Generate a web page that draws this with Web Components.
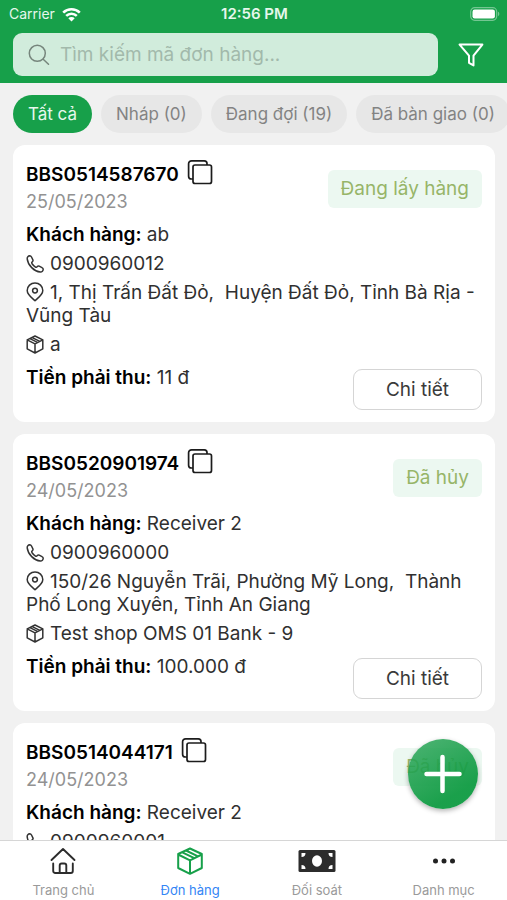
<!DOCTYPE html>
<html lang="vi">
<head>
<meta charset="utf-8">
<meta name="viewport" content="width=device-width, initial-scale=1">
<title>Đơn hàng</title>
<style>
  body { margin: 0; font-family: Inter, "Noto Sans", sans-serif; color: #303030; background: #f1f1f1; }
</style>
</head>
<body>
<orders-app></orders-app>

<template id="t-app">
  <style>
    :host { display: flex; flex-direction: column; height: 100vh; overflow: hidden; }
    header { flex: none; background: #17a04a; padding-bottom: 7px; }
    main { position: relative; flex: 1; min-height: 0; overflow: hidden; }
    nav.chips { display: flex; gap: 9px; padding: 12px 13px; overflow: hidden; }
    .list { display: flex; flex-direction: column; gap: 12px; padding: 0 12px 0 13px; }
    add-button { position: absolute; right: 29px; bottom: 31px; }
  </style>
  <header>
    <status-bar></status-bar>
    <search-bar></search-bar>
  </header>
  <main>
    <nav class="chips" aria-label="Trạng thái">
      <filter-chip active>Tất cả</filter-chip>
      <filter-chip>Nháp (0)</filter-chip>
      <filter-chip>Đang đợi (19)</filter-chip>
      <filter-chip>Đã bàn giao (0)</filter-chip>
    </nav>
    <div class="list">
      <order-card>
        <span slot="code">BBS0514587670</span><span slot="date">25/05/2023</span>
        <span slot="status">Đang lấy hàng</span><span slot="customer">ab</span>
        <span slot="phone">0900960012</span>
        <span slot="address">1, Thị Trấn Đất Đỏ,&nbsp; Huyện Đất Đỏ, Tỉnh Bà Rịa - Vũng Tàu</span>
        <span slot="goods">a</span><span slot="amount">11 đ</span>
      </order-card>
      <order-card>
        <span slot="code">BBS0520901974</span><span slot="date">24/05/2023</span>
        <span slot="status">Đã hủy</span><span slot="customer">Receiver 2</span>
        <span slot="phone">0900960000</span>
        <span slot="address">150/26 Nguyễn Trãi, Phường Mỹ Long,&nbsp; Thành Phố Long Xuyên, Tỉnh An Giang</span>
        <span slot="goods">Test shop OMS 01 Bank - 9</span><span slot="amount">100.000 đ</span>
      </order-card>
      <order-card brief>
        <span slot="code">BBS0514044171</span><span slot="date">24/05/2023</span>
        <span slot="status">Đã hủy</span><span slot="customer">Receiver 2</span>
        <span slot="phone">0900960001</span>
      </order-card>
    </div>
    <add-button></add-button>
  </main>
  <tab-bar></tab-bar>
</template>

<template id="t-status">
  <style>
    :host { display: grid; grid-template-columns: 1fr auto 1fr; align-items: center; height: 28px; padding: 0 7px 0 9px; color: #e6f7ec; font-size: 14px; line-height: 20px; margin-bottom: 5px; }
    .left { display: flex; align-items: center; gap: 7px; }
    b { font-weight: 600; font-size: 15px; }
    .battery { justify-self: end; }
    svg { display: block; }
  </style>
  <span class="left">Carrier
    <svg width="19" height="15" viewBox="0 0 19 15" fill="none" stroke="#fff" stroke-width="2.6"><path d="M1.2 5.6a12 12 0 0 1 16.6 0M4.2 8.9a7.6 7.6 0 0 1 10.6 0"/><path d="M9.5 14.4 6.3 11.2a4.6 4.6 0 0 1 6.4 0z" fill="#fff" stroke="none"/></svg>
  </span>
  <b>12:56 PM</b>
  <svg class="battery" width="30" height="14" viewBox="0 0 30 14"><rect x=".7" y=".7" width="26" height="12.6" rx="4" fill="none" stroke="#74c692" stroke-width="1.2"/><rect x="2.5" y="2.5" width="22.4" height="9" rx="2.2" fill="#fff"/><path d="M28 4.8v4.4c1.8-.6 1.8-3.8 0-4.4z" fill="#74c692"/></svg>
</template>

<template id="t-search">
  <style>
    :host { display: flex; align-items: center; padding: 0 13px; }
    label { flex: 1; min-width: 0; display: flex; align-items: center; gap: 10px; height: 43px; padding: 0 15px; box-sizing: border-box; border-radius: 9px; background: #d1ecdc; }
    input { flex: 1; min-width: 0; border: 0; padding: 0; outline: 0; background: none; font: inherit; font-size: 19px; line-height: 24px; color: #303030; }
    input::placeholder { color: #a2b9ab; opacity: 1; }
    button { flex: none; width: 56px; height: 43px; padding: 0 0 0 10px; border: 0; background: none; display: flex; align-items: center; justify-content: center; }
    svg { flex: none; display: block; }
  </style>
  <label>
    <svg width="22" height="22" viewBox="0 0 22 22" fill="none" stroke="#76857c" stroke-width="1.5" stroke-linecap="round"><circle cx="9.3" cy="9.3" r="8"/><path d="m15.2 15.2 5.3 5"/></svg>
    <input type="search" aria-label="Tìm kiếm mã đơn hàng" placeholder="Tìm kiếm mã đơn hàng...">
  </label>
  <button type="button" aria-label="Lọc">
    <svg width="26" height="24" viewBox="0 0 26 24" fill="none" stroke="#fff" stroke-width="2" stroke-linejoin="round"><path d="M1.6 1.6h22.8l-8.9 11v9.8l-4.500-2.600v-7.200z"/></svg>
  </button>
</template>

<template id="t-chip">
  <style>
    :host { display: block; flex: none; }
    button { height: 38px; padding: 0 15px; border: 0; border-radius: 19px; background: #e7e7e7; color: #838383; font: inherit; font-size: 17px; line-height: 20px; white-space: nowrap; }
    :host([active]) button { background: #17a04a; color: #e8f8ee; }
  </style>
  <button type="button"><slot></slot></button>
</template>

<template id="t-card">
  <style>
    :host { display: flex; flex-direction: column; gap: 6px; padding: 13px 13px 12px; border-radius: 12px; background: #fff; font-size: 19px; line-height: 23px; }
    p, h2 { margin: 0; font-size: inherit; }
    .head { display: flex; justify-content: space-between; align-items: flex-start; margin-bottom: 4px; }
    .title { display: flex; gap: 8px; height: 32px; }
    h2 { color: #000; font-weight: 600; line-height: 34px; }
    b { color: #000; font-weight: 600; }
    .date { color: #929292; font-size: 18px; }
    .badge { margin-top: 12px; padding: 0 13px; border-radius: 6px; background: #ecf8f1; color: #97b568; line-height: 38px; white-space: nowrap; }
    .copy { flex: none; width: 26px; height: 28px; padding: 0; border: 0; background: none; }
    svg { display: block; }
    p svg { display: inline-block; vertical-align: -3px; margin-right: 6px; }
    .foot { display: flex; justify-content: space-between; align-items: flex-start; margin-top: 4px; }
    .detail { margin-top: 3px; width: 129px; height: 41px; padding: 0; border: 1px solid #d5d5d5; border-radius: 9px; background: #fff; color: #3a3a3a; font: inherit; }
    :host([brief]) .full { display: none; }
  </style>
  <div class="head">
    <div>
      <div class="title">
        <h2><slot name="code"></slot></h2>
        <button class="copy" type="button" aria-label="Sao chép">
          <svg width="26" height="28" viewBox="0 0 26 28" fill="none" stroke="#1c1c1c" stroke-width="1.700" stroke-linejoin="round"><rect x="6" y="7" width="18.500" height="18.500" rx="2"/><path d="M20 7V5.500A2.700 2.700 0 0 0 17.300 2.800H4.600A3 3 0 0 0 1.600 5.800v12.400A2.800 2.800 0 0 0 4.400 21H6"/></svg>
        </button>
      </div>
      <p class="date"><slot name="date"></slot></p>
    </div>
    <div class="badge"><slot name="status"></slot></div>
  </div>
  <p><b>Khách hàng:</b> <slot name="customer"></slot></p>
  <p><svg width="18" height="18" viewBox="0 0 18 18" fill="none" stroke="#333" stroke-width="1.500" stroke-linejoin="round"><path d="M1.2 3.8C1 2 2.3.9 3.7.8c.9 0 1.4.4 1.8 1.2L6.9 4.8c.4.8.1 1.4-.5 1.9-.8.6-1 1-.5 1.8 1 1.5 2.2 2.7 3.6 3.6.8.5 1.2.3 1.8-.5.5-.6 1.1-.9 1.9-.5l2.8 1.5c.8.4 1.2.9 1.2 1.7 0 1.5-1.1 2.8-2.9 2.7-2.600-.2-5.800-1.600-8.600-4.400S1.500 6.400 1.200 3.800z"/></svg><slot name="phone"></slot></p>
  <p class="full"><svg width="18" height="20" viewBox="0 0 18 20" fill="none" stroke="#333" stroke-width="1.5" stroke-linejoin="round"><path d="M9 18.700C6.500 16.300 1.200 13 1.200 8.500a7.800 7.600 0 0 1 15.600 0C16.800 13 11.500 16.300 9 18.700z"/><circle cx="9" cy="8.600" r="2.400"/></svg><slot name="address"></slot></p>
  <p class="full"><svg width="18" height="19" viewBox="0 0 18 19" fill="none" stroke="#333" stroke-width="1.500" stroke-linejoin="round" stroke-linecap="round"><path d="M9 1 16.800 4.800v9L9 18l-7.800-4.200v-9zM1.200 4.800 9 8.800l7.800-4M9 8.800V18M6.300 2.600l7.500 3.700M3.900 3.700l7.600 3.700"/></svg><slot name="goods"></slot></p>
  <div class="foot full">
    <p><b>Tiền phải thu:</b> <slot name="amount"></slot></p>
    <button class="detail" type="button">Chi tiết</button>
  </div>
</template>

<template id="t-add">
  <style>
    :host { display: block; }
    button { width: 70px; height: 70px; padding: 0; border: 0; border-radius: 50%; background: linear-gradient(150deg, rgba(50,168,94,.86), rgba(12,154,64,.94) 75%); box-shadow: 0 2px 5px rgba(0,0,0,.3); display: flex; align-items: center; justify-content: center; }
  </style>
  <button type="button" aria-label="Thêm đơn hàng"><svg width="40" height="42" viewBox="0 0 40 42" stroke="#fff" stroke-width="4.500" stroke-linecap="round"><path d="M19.500 4v34M3.500 21h33"/></svg></button>
</template>

<template id="t-tabs">
  <style>
    :host { display: block; flex: none; background: #fff; border-top: 1px solid #d6d6d6; }
    nav { display: grid; grid-template-columns: repeat(4, 1fr); }
  </style>
  <nav aria-label="Điều hướng chính">
    <tab-item><svg slot="icon" width="26" height="28" viewBox="0 0 26 28" fill="none" stroke="#2c2c2c" stroke-width="1.900" stroke-linecap="round" stroke-linejoin="round"><path d="M1.500 13 13 2l11.500 11M3.200 16.500V24a2 2 0 0 0 2 2h15.600a2 2 0 0 0 2-2v-7.500M9.700 25.500v-7a2 2 0 0 1 2-2h2.600a2 2 0 0 1 2 2v7"/></svg>Trang chủ</tab-item>
    <tab-item active><svg slot="icon" width="26" height="28" viewBox="0 0 26 28" fill="none" stroke="#17a04a" stroke-width="2" stroke-linecap="round" stroke-linejoin="round"><path d="M13 1.500 24.800 7v14L13 26.800 1.200 21V7zM1.200 7.500 13 13.300l11.800-5.800M13 13.300v13M9 3.500l11.500 5.600M5.300 5.300l11.500 5.600"/></svg>Đơn hàng</tab-item>
    <tab-item><svg slot="icon" width="38" height="24" viewBox="0 0 38 24"><rect x=".5" y="1" width="37" height="22" rx="1.500" fill="#2c2c2c"/><g fill="#fff"><ellipse cx="19" cy="12" rx="5" ry="5.800"/><path d="M3.500 4h4a4 4 0 0 1-4 4zM34.500 4h-4a4 4 0 0 0 4 4zM3.500 20h4a4 4 0 0 0-4-4zM34.500 20h-4a4 4 0 0 1 4-4z"/></g></svg>Đối soát</tab-item>
    <tab-item><svg slot="icon" width="24" height="8" viewBox="0 0 24 8" fill="#222"><circle cx="3.500" cy="4" r="2.500"/><circle cx="12" cy="4" r="2.500"/><circle cx="20.500" cy="4" r="2.500"/></svg>Danh mục</tab-item>
  </nav>
</template>

<template id="t-tab">
  <style>
    :host { display: block; }
    a { display: flex; flex-direction: column; align-items: center; height: 59px; color: #9a9a9a; font-size: 13px; line-height: 18px; text-decoration: none; }
    .icon { display: flex; align-items: center; height: 40px; }
    ::slotted(svg) { display: block; }
    :host([active]) a { color: #3385f5; }
  </style>
  <a href="#"><span class="icon"><slot name="icon"></slot></span><span><slot></slot></span></a>
</template>

<script>
  const define = (name, templateId) => customElements.define(name, class extends HTMLElement {
    constructor() {
      super();
      this.attachShadow({ mode: 'open' })
        .append(document.getElementById(templateId).content.cloneNode(true));
    }
  });
  define('status-bar', 't-status');
  define('search-bar', 't-search');
  define('filter-chip', 't-chip');
  define('order-card', 't-card');
  define('add-button', 't-add');
  define('tab-item', 't-tab');
  define('tab-bar', 't-tabs');
  define('orders-app', 't-app');
</script>
</body>
</html>
